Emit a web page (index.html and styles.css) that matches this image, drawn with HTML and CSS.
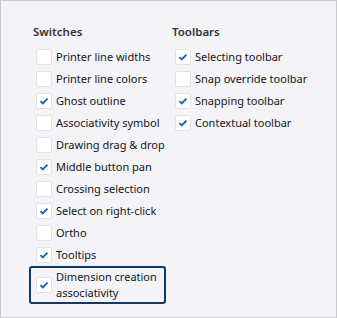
FILE: index.html
```html
<!DOCTYPE html>
<html>
<head>
<meta charset="utf-8">
<link rel="stylesheet" href="styles.css">
</head>
<body>
<div class="panel">
  <div class="col">
    <div class="heading">Switches</div>
    <div class="row"><span class="box"></span><span class="label">Printer line widths</span></div>
    <div class="row"><span class="box"></span><span class="label">Printer line colors</span></div>
    <div class="row"><span class="box checked"><svg viewBox="0 0 16 16"><path d="M4 8.2 L6.6 10.8 L12 5.2"/></svg></span><span class="label">Ghost outline</span></div>
    <div class="row"><span class="box"></span><span class="label">Associativity symbol</span></div>
    <div class="row"><span class="box"></span><span class="label">Drawing drag &amp; drop</span></div>
    <div class="row"><span class="box checked"><svg viewBox="0 0 16 16"><path d="M4 8.2 L6.6 10.8 L12 5.2"/></svg></span><span class="label">Middle button pan</span></div>
    <div class="row"><span class="box"></span><span class="label">Crossing selection</span></div>
    <div class="row"><span class="box checked"><svg viewBox="0 0 16 16"><path d="M4 8.2 L6.6 10.8 L12 5.2"/></svg></span><span class="label">Select on right-click</span></div>
    <div class="row"><span class="box"></span><span class="label">Ortho</span></div>
    <div class="row"><span class="box checked"><svg viewBox="0 0 16 16"><path d="M4 8.2 L6.6 10.8 L12 5.2"/></svg></span><span class="label">Tooltips</span></div>
    <div class="row focused"><span class="box checked"><svg viewBox="0 0 16 16"><path d="M4 8.2 L6.6 10.8 L12 5.2"/></svg></span><span class="label wrap">Dimension creation associativity</span></div>
  </div>
  <div class="col">
    <div class="heading">Toolbars</div>
    <div class="row"><span class="box checked"><svg viewBox="0 0 16 16"><path d="M4 8.2 L6.6 10.8 L12 5.2"/></svg></span><span class="label">Selecting toolbar</span></div>
    <div class="row"><span class="box"></span><span class="label">Snap override toolbar</span></div>
    <div class="row"><span class="box checked"><svg viewBox="0 0 16 16"><path d="M4 8.2 L6.6 10.8 L12 5.2"/></svg></span><span class="label">Snapping toolbar</span></div>
    <div class="row"><span class="box checked"><svg viewBox="0 0 16 16"><path d="M4 8.2 L6.6 10.8 L12 5.2"/></svg></span><span class="label">Contextual toolbar</span></div>
  </div>
</div>
</body>
</html>
```
FILE: styles.css
```css
html, body {
  margin: 0;
  padding: 0;
}
body {
  font-family: "Noto Sans", "Segoe UI", sans-serif;
  font-size: 11px;
  color: #161616;
}
.panel {
  width: 337px;
  height: 318px;
  box-sizing: border-box;
  border: 1px solid #c9c9cd;
  background: #f3f3f8;
  padding: 23px 0 0 28px;
  display: grid;
  grid-template-columns: 137px 1fr;
  column-gap: 2px;
  align-items: start;
}
.col {
  display: flex;
  flex-direction: column;
  min-width: 0;
}
.heading {
  font-weight: 600;
  font-size: 11.5px;
  color: #333333;
  line-height: 16px;
  padding-left: 4px;
  margin-bottom: 6px;
}
.row {
  display: flex;
  align-items: center;
  border: 2px solid transparent;
  border-radius: 3px;
  padding: 1px 5px;
  line-height: 16px;
}
.row.focused {
  border-color: #0b3a6c;
}
.box {
  flex: none;
  width: 16px;
  height: 16px;
  box-sizing: border-box;
  background: #ffffff;
  border: 1px solid #e2e2e6;
  border-radius: 2px;
  margin-right: 4px;
  display: flex;
}
.box svg {
  width: 14px;
  height: 14px;
}
.box svg path {
  fill: none;
  stroke: #1866b4;
  stroke-width: 2.2;
}
.label {
  white-space: nowrap;
}
.label.wrap {
  white-space: normal;
}
```
